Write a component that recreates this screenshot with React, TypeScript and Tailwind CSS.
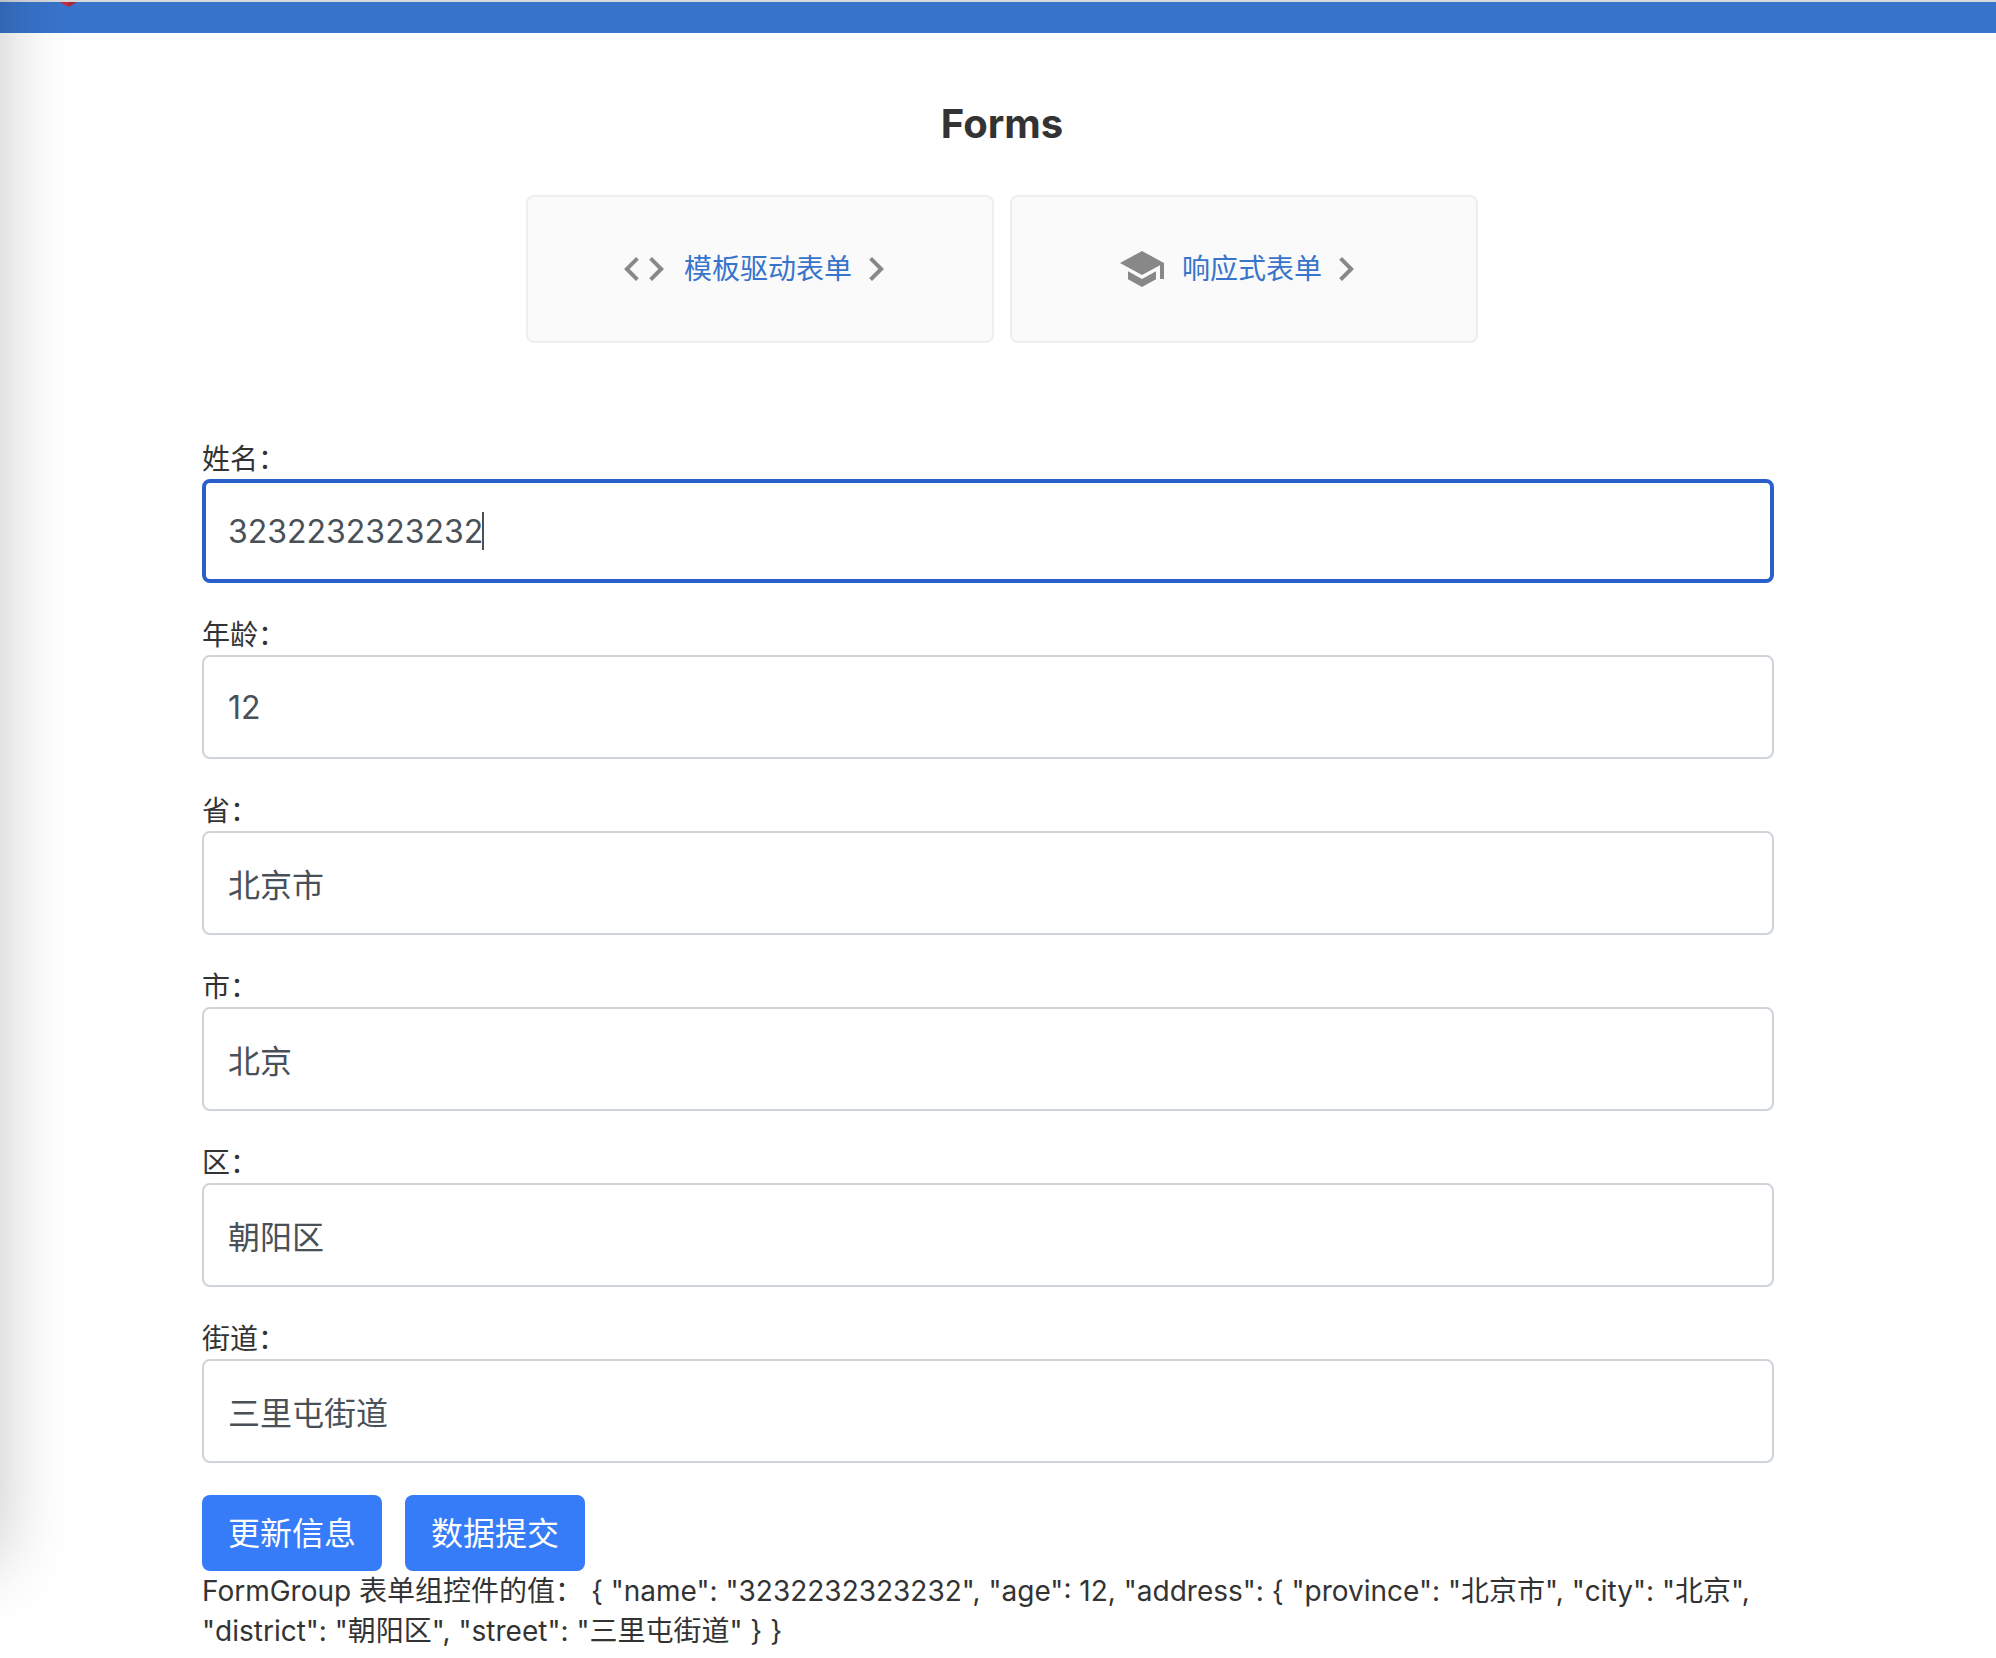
import {useState} from 'react'

type Field = 'name' | 'age' | 'province' | 'city' | 'district' | 'street'

const fields: { key: Field, label: string }[] = [
  {key: 'name', label: '姓名：'},
  {key: 'age', label: '年龄：'},
  {key: 'province', label: '省：'},
  {key: 'city', label: '市：'},
  {key: 'district', label: '区：'},
  {key: 'street', label: '街道：'},
]

const CODE = 'M9.4 16.6L4.8 12l4.6-4.6L8 6l-6 6 6 6 1.4-1.4zm5.2 0l4.6-4.6-4.6-4.6L16 6l6 6-6 6-1.4-1.4z'
const SCHOOL = 'M5 13.18v4L12 21l7-3.82v-4L12 17l-7-3.82zM12 3L1 9l11 6 9-4.91V17h2V9L12 3z'
const CHEVRON = 'M10 6L8.59 7.41 13.17 12l-4.58 4.59L10 18l6-6z'

export default function App() {
  const [values, setValues] = useState<Record<Field, string>>({
    name: '3232232323232',
    age: '12',
    province: '北京市',
    city: '北京',
    district: '朝阳区',
    street: '三里屯街道',
  })

  const {name, age, ...address} = values
  const json = JSON.stringify({name, age: Number(age), address}, null, 2)

  return (
    <div className="relative min-h-screen overflow-hidden bg-white font-['Inter','Noto_Sans_CJK_SC',sans-serif] text-[28px] leading-10 text-[#333]">
      <Toolbar/>

      <main className="pl-2">
        <h2 className="pt-[71px] text-center text-[40px] font-bold leading-10">Forms</h2>

        <nav className="mt-[51px] flex flex-wrap justify-center gap-4">
          <Card icon={CODE} label="模板驱动表单"/>
          <Card icon={SCHOOL} label="响应式表单"/>
        </nav>

        <form className="mt-24 mr-[222px] ml-[194px]" onSubmit={e => e.preventDefault()}>
          {fields.map(({key, label}) => (
            <div key={key} className="mb-8">
              <label htmlFor={key} className="block">{label}</label>
              <div className="relative">
                <input
                  id={key}
                  type="text"
                  value={values[key]}
                  onChange={e => setValues({...values, [key]: e.target.value})}
                  className={`block h-[104px] w-full rounded-lg bg-white text-[32px] text-[#495057] outline-none ${key === 'name' ? 'border-4 border-[#2a5fc9] px-[22px]' : 'border-2 border-[#ced4da] px-6'}`}
                />
                {key === 'name' && <span className="absolute top-[33px] left-[280px] h-[38px] w-0.5 bg-[#495057]"/>}
              </div>
            </div>
          ))}

          <div className="flex gap-[23px]">
            <button type="button" className="h-[76px] rounded-lg bg-[#367bf7] px-[26px] pt-0.5 text-[32px] text-white">更新信息</button>
            <button type="submit" className="h-[76px] rounded-lg bg-[#367bf7] px-[26px] pt-0.5 text-[32px] text-white">数据提交</button>
          </div>
          <p>{`FormGroup 表单组控件的值： ${json}`}</p>
        </form>
      </main>

      {/* shadow cast by the window on the left */}
      <div className="pointer-events-none absolute -top-24 right-full bottom-24 w-24 shadow-[0_0_72px_0_rgba(0,0,0,0.23)]"/>
    </div>
  )
}

function Toolbar() {
  return (
    <header className="h-[33px] border-t-2 border-[#d5d8dc] bg-[#3874cb] pl-[60px]">
      <svg width="17" height="5" viewBox="0 0 17 5" className="block" aria-hidden="true">
        <path d="M0 0h8.5v5z" fill="#d0272f"/>
        <path d="M17 0H8.5v5z" fill="#b02430"/>
      </svg>
    </header>
  )
}

function Card({icon, label}: { icon: string, label: string }) {
  return (
    <a href="#" className="flex h-[148px] w-[468px] items-center justify-center rounded-lg border-2 border-[#eee] bg-[#fafafa] text-[#3874cb]">
      <Icon path={icon}/>
      <span className="ml-4">{label}</span>
      <Icon path={CHEVRON}/>
    </a>
  )
}

function Icon({path}: { path: string }) {
  return (
    <svg viewBox="0 0 24 24" className="size-12 fill-[#888]" aria-hidden="true">
      <path d={path}/>
    </svg>
  )
}
